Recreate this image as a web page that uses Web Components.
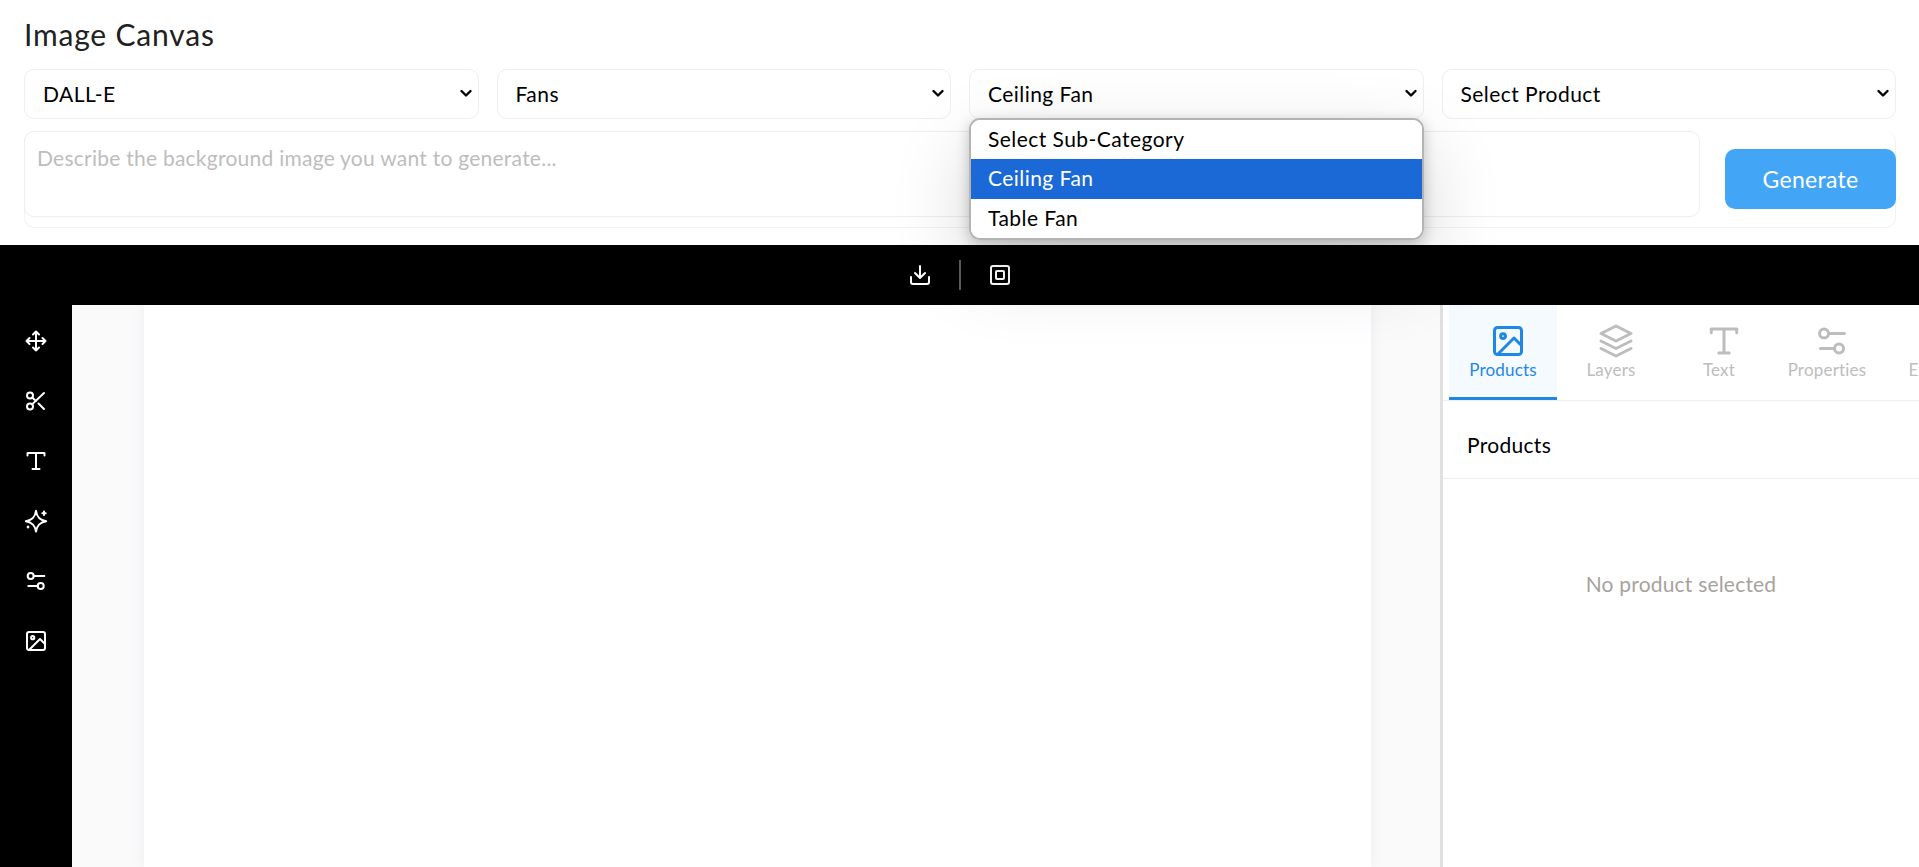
<!DOCTYPE html>
<html lang="en">
<head>
<meta charset="utf-8">
<title>Image Canvas</title>
<style>
  html, body { margin: 0; height: 100%; background: #fff; overflow: hidden; }
  body { font-family: "Lato", "Noto Sans", sans-serif; }
</style>
</head>
<body>
<image-canvas-app></image-canvas-app>

<script>
// shared icon bodies, all on a 24 box
const icons = {
  move: '<path d="M12 2.5v19M2.5 12h19M9 5.5l3-3 3 3M9 18.5l3 3 3-3M5.5 9l-3 3 3 3M18.5 9l3 3-3 3"/>',
  cut: '<circle cx="6" cy="6.5" r="3"/><circle cx="6" cy="17.5" r="3"/><path d="M20 4L8.1 15.4M14.5 14.5L20 20M8.1 8.6L12 12"/>',
  text: '<path d="M3.5 6.5V4h17v2.5M12 4v16M8.5 20h7"/>',
  sparks: '<path d="M12 1.8C12.9 8.2 15.6 11 22.2 12.2C15.6 13.4 12.9 16.2 12 22.6C11.1 16.2 8.4 13.4 1.8 12.2C8.4 11 11.1 8.2 12 1.8Z"/><path d="M20 2.6v3.4M18.3 4.3h3.4M4 17.6v.8M3.6 18h.8"/>',
  sliders: '<circle cx="6.7" cy="7" r="3"/><path d="M9.7 7h10.6"/><circle cx="16.7" cy="17" r="3"/><path d="M4.3 17h9.4"/>',
  image: '<rect x="3" y="3" width="18" height="18" rx="2"/><circle cx="8.7" cy="8.7" r="1.6"/><path d="M21 15l-5-5L5 21"/>',
  layers: '<path d="M12 2L2 7l10 5 10-5-10-5zM2 17l10 5 10-5M2 12l10 5 10-5"/>',
  download: '<path d="M3 14v5a2 2 0 002 2h14a2 2 0 002-2v-5M7 10l5 5 5-5M12 15V3"/>',
  frame: '<rect x="3" y="3" width="18" height="18" rx="2"/><rect x="8" y="8" width="8" height="8" rx="1"/>'
}

/**
 * A stroked icon picked by name.
 */
customElements.define('ui-icon', class extends HTMLElement {
  constructor () {
    super()
    this.attachShadow({ mode: 'open' }).innerHTML = `
      <style>
        :host { display: block; width: var(--icon-size, 24px); height: var(--icon-size, 24px); }
        svg { display: block; width: 100%; height: 100%; fill: none; stroke: currentColor; stroke-width: var(--icon-stroke, 2); stroke-linecap: round; stroke-linejoin: round; }
      </style>
      <svg viewBox="0 0 24 24">${icons[this.getAttribute('name')]}</svg>`
  }
})

/**
 * Closed select box with a chevron.
 */
customElements.define('select-box', class extends HTMLElement {
  constructor () {
    super()
    this.attachShadow({ mode: 'open' }).innerHTML = `
      <style>
        :host {
          display: flex; align-items: center; justify-content: space-between;
          box-sizing: border-box; height: 50px; min-width: 0;
          padding: 0 5px 2px 18px;
          border: 1px solid #eeeeee; border-radius: 10px;
          background: #fff; color: #000; font-size: 21px; letter-spacing: .45px;
        }
        svg { width: 14px; height: 14px; fill: none; stroke: #000; stroke-width: 2.4; stroke-linecap: round; stroke-linejoin: round; }
      </style>
      <slot></slot>
      <svg viewBox="0 0 14 14"><path d="M2.5 5l4.5 4.5L11.5 5"/></svg>`
  }
})

/**
 * The open list of a select box, lies over the page.
 */
customElements.define('select-list', class extends HTMLElement {
  constructor () {
    super()
    this.attachShadow({ mode: 'open' }).innerHTML = `
      <style>
        :host {
          display: block; position: absolute; z-index: 5;
          left: 969px; top: 118px; width: 455px; height: 122px; box-sizing: border-box;
          border: 2px solid #b4b4b4; border-radius: 11px; overflow: hidden; background: #fff;
        }
        ::slotted(:first-child) { height: 39px; }
      </style>
      <slot></slot>`
  }
})
customElements.define('select-option', class extends HTMLElement {
  constructor () {
    super()
    this.attachShadow({ mode: 'open' }).innerHTML = `
      <style>
        :host {
          display: flex; align-items: center; box-sizing: border-box; height: 40px; padding: 0 0 3px 17px;
          font-size: 21px; letter-spacing: .45px; color: #000; background: #fff;
        }
        :host([selected]) { background: #1a69d6; color: #fff; }
      </style>
      <slot></slot>`
  }
})

/**
 * Top part: title, the four selects, prompt and generate button.
 */
customElements.define('prompt-header', class extends HTMLElement {
  constructor () {
    super()
    this.attachShadow({ mode: 'open' }).innerHTML = `
      <style>
        :host { display: block; box-sizing: border-box; height: 245px; padding: 0 23px 0 24px; background: #fff; }
        h1 { margin: 0; height: 69px; line-height: 69px; font-size: 30px; letter-spacing: .8px; font-weight: 400; color: #212121; }
        .selects { display: grid; grid-template-columns: repeat(4, 1fr); gap: 18px; }
        .card {
          display: flex; align-items: center; gap: 25px; box-sizing: border-box;
          height: 97px; margin-top: 12px;
          border: solid #f3f3f3; border-width: 0 1px 1px 1px; border-radius: 10px;
        }
        .prompt {
          flex: 1; box-sizing: border-box; height: 86px; margin: 0 0 10px -1px; padding: 13px 12px;
          border: 1px solid #eeeeee; border-radius: 10px;
          color: #bdbdbd; font-size: 21px; letter-spacing: .25px;
        }
        .generate {
          display: flex; align-items: center; justify-content: center;
          width: 171px; height: 60px; margin-right: -1px;
          border-radius: 10px; background: #42a5f5; color: #fff; font-size: 23px; letter-spacing: .3px;
        }
      </style>
      <h1>Image Canvas</h1>
      <div class="selects">
        <select-box>DALL-E</select-box>
        <select-box>Fans</select-box>
        <select-box>Ceiling Fan</select-box>
        <select-box>Select Product</select-box>
      </div>
      <div class="card">
        <div class="prompt">Describe the background image you want to generate...</div>
        <div class="generate">Generate</div>
      </div>`
  }
})

customElements.define('top-toolbar', class extends HTMLElement {
  constructor () {
    super()
    this.attachShadow({ mode: 'open' }).innerHTML = `
      <style>
        :host { display: flex; align-items: center; justify-content: center; gap: 27px; height: 60px; background: #000; color: #fff; }
        i { display: block; width: 2px; height: 30px; background: #5c5c5c; }
      </style>
      <ui-icon name="download"></ui-icon>
      <i></i>
      <ui-icon name="frame"></ui-icon>`
  }
})

customElements.define('tool-rail', class extends HTMLElement {
  constructor () {
    super()
    const names = ['move', 'cut', 'text', 'sparks', 'sliders', 'image']
    this.attachShadow({ mode: 'open' }).innerHTML = `
      <style>
        :host { display: flex; flex-direction: column; align-items: center; gap: 36px; padding-top: 24px; background: #000; color: #fff; }
      </style>
      ${names.map(n => `<ui-icon name="${n}"></ui-icon>`).join('')}`
  }
})

customElements.define('canvas-stage', class extends HTMLElement {
  constructor () {
    super()
    this.attachShadow({ mode: 'open' }).innerHTML = `
      <style>
        :host { display: block; padding: 0 69px 0 72px; background: #fafafb; min-width: 0; overflow: hidden; }
        div { height: 100%; background: #fff; box-shadow: 0 0 14px rgba(30,30,60,.06); }
      </style>
      <div></div>`
  }
})

customElements.define('panel-tab', class extends HTMLElement {
  constructor () {
    super()
    this.attachShadow({ mode: 'open' }).innerHTML = `
      <style>
        :host {
          display: flex; flex: none; flex-direction: column; align-items: center; box-sizing: border-box;
          width: 108px; height: 95px; padding-top: 18px; color: #bdbdbd;
          font-size: 17px; letter-spacing: .2px; --icon-size: 36px;
        }
        :host([active]) { color: #1e88e5; background: #f5fafe; box-shadow: inset 0 -3px 0 #1e88e5; }
        ui-icon { margin-left: 10px; }
        span { margin-top: 1px; line-height: 20px; white-space: nowrap; }
      </style>
      <ui-icon name="${this.getAttribute('icon')}"></ui-icon>
      <span><slot></slot></span>`
  }
})

customElements.define('side-panel', class extends HTMLElement {
  constructor () {
    super()
    this.attachShadow({ mode: 'open' }).innerHTML = `
      <style>
        :host { display: flex; flex-direction: column; min-width: 0; overflow: hidden; border-left: 3px solid #e0e0e0; background: #fff; }
        .tabs { display: flex; padding-left: 6px; border-bottom: 1px solid #eeeeee; }
        h2 { margin: 0; padding: 3px 24px 0; height: 78px; line-height: 82px; box-sizing: border-box; font-size: 21px; letter-spacing: .3px; font-weight: 400; color: #000; border-bottom: 1px solid #eeeeee; }
        p { margin: 0; padding-top: 92px; text-align: center; font-size: 21px; letter-spacing: .2px; color: #a8a29e; }
      </style>
      <div class="tabs">
        <panel-tab icon="image" active>Products</panel-tab>
        <panel-tab icon="layers">Layers</panel-tab>
        <panel-tab icon="text">Text</panel-tab>
        <panel-tab icon="sliders">Properties</panel-tab>
        <panel-tab icon="sparks">Effects</panel-tab>
      </div>
      <h2>Products</h2>
      <p>No product selected</p>`
  }
})

customElements.define('image-canvas-app', class extends HTMLElement {
  constructor () {
    super()
    this.attachShadow({ mode: 'open' }).innerHTML = `
      <style>
        :host { display: flex; flex-direction: column; position: relative; height: 867px; }
        .work { flex: 1; display: grid; grid-template-columns: 72px 1fr 479px; min-height: 0; }
        .drop-shadow { position: absolute; z-index: 4; left: 969px; top: 118px; width: 455px; height: 122px; border-radius: 11px; box-shadow: 0 30px 80px rgba(0,0,0,.16), 0 4px 14px rgba(0,0,0,.22); }
      </style>
      <prompt-header></prompt-header>
      <top-toolbar></top-toolbar>
      <div class="work">
        <tool-rail></tool-rail>
        <canvas-stage></canvas-stage>
        <side-panel></side-panel>
      </div>
      <div class="drop-shadow"></div>
      <select-list>
        <select-option>Select Sub-Category</select-option>
        <select-option selected>Ceiling Fan</select-option>
        <select-option>Table Fan</select-option>
      </select-list>`
  }
})
</script>
</body>
</html>
